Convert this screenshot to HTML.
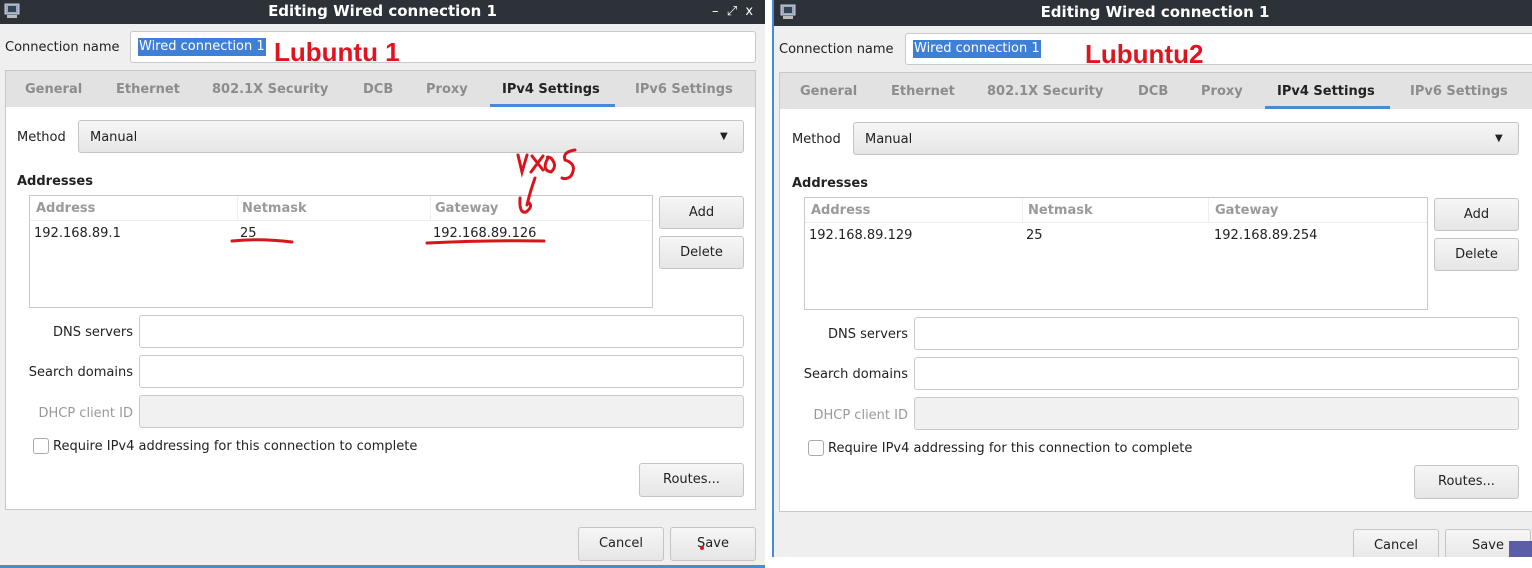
<!DOCTYPE html>
<html><head><meta charset="utf-8"><style>
*{box-sizing:border-box;margin:0;padding:0}
body{width:1532px;height:568px;overflow:hidden;background:#fff;position:relative;font-family:"DejaVu Sans","Liberation Sans",sans-serif;font-size:13px;color:#222}
.d{position:absolute;background:#efefef;overflow:hidden}
.a{position:absolute;white-space:nowrap;padding-top:2px}
.tb{position:absolute;left:0;right:0;top:0;background:#2d3138;color:#fff;font-weight:bold;font-size:15px;text-align:center}
.in{position:absolute;background:#fff;border:1px solid #c9c9c9;border-radius:3px}
.btn{position:absolute;border:1px solid #c4c4c4;border-radius:3px;background:linear-gradient(#f6f6f6,#e6e6e6);text-align:center}
.tab{position:absolute;color:#8c8c8c;font-weight:bold;font-size:13px;padding-top:2px}
.hd{color:#9a9a9a;font-weight:bold}
</style></head><body>

<!-- LEFT -->
<div class="d" style="left:0;top:0;width:765px;height:568px">
 <div class="tb" style="height:24px;line-height:22px">Editing Wired connection 1</div>
 <svg class="a" style="left:4px;top:3px;padding:0" width="18" height="16"><rect x="1" y="1" width="14" height="10" fill="#9aa8c0" stroke="#ccd" /><rect x="4" y="3" width="8" height="6" fill="#345"/><rect x="3" y="12" width="10" height="3" fill="#bbb"/></svg>
 <div class="a" style="left:712px;top:2px;color:#fff;font-size:13px">–&nbsp;&nbsp;⤢&nbsp;&nbsp;x</div>
 <div class="a" style="left:5px;top:38px">Connection name</div>
 <div class="in" style="left:130px;top:31px;width:626px;height:32px"></div>
 <div class="a" style="left:138px;top:38px;height:18px;background:#3e7fd8;color:#fff;padding:0 1px;line-height:17px">Wired connection 1</div>
 <div class="a" style="left:274px;top:35px;color:#e0141e;font-size:26px;font-family:'Liberation Sans',sans-serif;font-weight:bold">Lubuntu 1</div>
 <div class="a" style="left:5px;top:70px;width:751px;height:440px;background:#fff;border:1px solid #c8c8c8"></div>
 <div class="a" style="left:6px;top:71px;width:749px;height:36px;background:#e2e2e2"></div>
 <div class="tab" style="left:25px;top:80px">General</div>
 <div class="tab" style="left:116px;top:80px">Ethernet</div>
 <div class="tab" style="left:212px;top:80px">802.1X Security</div>
 <div class="tab" style="left:363px;top:80px">DCB</div>
 <div class="tab" style="left:426px;top:80px">Proxy</div>
 <div class="tab" style="left:502px;top:80px;color:#222">IPv4 Settings</div>
 <div class="tab" style="left:635px;top:80px">IPv6 Settings</div>
 <div class="a" style="left:490px;top:104px;width:125px;height:3px;background:#4a8ad4;padding:0"></div>
 <div class="a" style="left:17px;top:128px">Method</div>
 <div class="btn" style="left:78px;top:120px;width:666px;height:33px"></div>
 <div class="a" style="left:90px;top:128px">Manual</div>
 <div class="a" style="left:720px;top:129px;font-size:10px">▼</div>
 <div class="a" style="left:17px;top:172px;font-weight:bold">Addresses</div>
 <div class="a" style="left:29px;top:195px;width:624px;height:113px;border:1px solid #c8c8c8;background:#fff"></div>
 <div class="a" style="left:30px;top:220px;width:622px;height:1px;background:#eee;padding:0"></div>
 <div class="a" style="left:237px;top:196px;width:1px;height:24px;background:#eee;padding:0"></div>
 <div class="a" style="left:430px;top:196px;width:1px;height:24px;background:#eee;padding:0"></div>
 <div class="a hd" style="left:36px;top:199px">Address</div>
 <div class="a hd" style="left:242px;top:199px">Netmask</div>
 <div class="a hd" style="left:435px;top:199px">Gateway</div>
 <div class="a" style="left:34px;top:224px">192.168.89.1</div>
 <div class="a" style="left:240px;top:224px">25</div>
 <div class="a" style="left:433px;top:224px">192.168.89.126</div>
 <div class="btn" style="left:659px;top:196px;width:85px;height:33px;line-height:31px">Add</div>
 <div class="btn" style="left:659px;top:236px;width:85px;height:33px;line-height:31px">Delete</div>
 <div class="a" style="left:0;width:133px;text-align:right;top:323px">DNS servers</div>
 <div class="in" style="left:139px;top:315px;width:605px;height:33px"></div>
 <div class="a" style="left:0;width:133px;text-align:right;top:363px">Search domains</div>
 <div class="in" style="left:139px;top:355px;width:605px;height:33px"></div>
 <div class="a" style="left:0;width:133px;text-align:right;top:404px;color:#999">DHCP client ID</div>
 <div class="in" style="left:139px;top:395px;width:605px;height:33px;background:#f1f1f1"></div>
 <div class="a" style="left:33px;top:438px;width:16px;height:16px;border:1px solid #aaa;border-radius:3px;background:#fff;padding:0"></div>
 <div class="a" style="left:53px;top:437px">Require IPv4 addressing for this connection to complete</div>
 <div class="btn" style="left:639px;top:463px;width:105px;height:34px;line-height:32px">Routes...</div>
 <div class="btn" style="left:578px;top:527px;width:86px;height:34px;line-height:32px">Cancel</div>
 <div class="btn" style="left:670px;top:527px;width:86px;height:34px;line-height:32px">Save</div>
 <div class="a" style="left:0;top:565px;width:765px;height:3px;background:#4a8ad4;padding:0"></div>
 <svg class="a" style="left:0;top:0;padding:0" width="765" height="568">
  <g stroke="#d8141c" fill="none" stroke-linecap="round" stroke-width="3">
   <path d="M232 241 Q260 238 292 242"/>
   <path d="M427 243 Q490 240 544 241"/>
   <path d="M518 155 L522 172 L527 155 M532 156 L543 170 M543 156 L531 172 M548 158 Q541 170 551 172 Q558 166 551 158 Q546 156 548 158 M575 150 Q562 152 565 160 Q578 164 571 176 Q566 180 562 178"/>
   <path d="M535 178 Q530 192 527 205 M520 198 Q519 214 526 212 Q534 206 528 202"/>
  </g>
  <circle cx="702" cy="548" r="2" fill="#d8141c"/>
 </svg>
</div>

<!-- RIGHT -->
<div class="a" style="left:772px;top:0;width:2px;height:557px;background:#4a8ad4;padding:0"></div>
<div class="d" style="left:774px;top:0;width:758px;height:557px">
 <div class="tb" style="height:26px;line-height:24px;left:0;width:762px">Editing Wired connection 1</div>
 <svg class="a" style="left:6px;top:4px;padding:0" width="18" height="16"><rect x="1" y="1" width="14" height="10" fill="#9aa8c0" stroke="#ccd" /><rect x="4" y="3" width="8" height="6" fill="#345"/><rect x="3" y="12" width="10" height="3" fill="#bbb"/></svg>
 <div class="a" style="left:5px;top:40px">Connection name</div>
 <div class="in" style="left:131px;top:33px;width:630px;height:32px"></div>
 <div class="a" style="left:139px;top:40px;height:18px;background:#3e7fd8;color:#fff;padding:0 1px;line-height:17px">Wired connection 1</div>
 <div class="a" style="left:311px;top:37px;color:#e0141e;font-size:26px;font-family:'Liberation Sans',sans-serif;font-weight:bold">Lubuntu2</div>
 <div class="a" style="left:5px;top:72px;width:760px;height:440px;background:#fff;border:1px solid #c8c8c8"></div>
 <div class="a" style="left:6px;top:73px;width:758px;height:36px;background:#e2e2e2"></div>
 <div class="tab" style="left:26px;top:82px">General</div>
 <div class="tab" style="left:117px;top:82px">Ethernet</div>
 <div class="tab" style="left:213px;top:82px">802.1X Security</div>
 <div class="tab" style="left:364px;top:82px">DCB</div>
 <div class="tab" style="left:427px;top:82px">Proxy</div>
 <div class="tab" style="left:503px;top:82px;color:#222">IPv4 Settings</div>
 <div class="tab" style="left:636px;top:82px">IPv6 Settings</div>
 <div class="a" style="left:491px;top:106px;width:125px;height:3px;background:#4a8ad4;padding:0"></div>
 <div class="a" style="left:18px;top:130px">Method</div>
 <div class="btn" style="left:79px;top:122px;width:666px;height:33px"></div>
 <div class="a" style="left:91px;top:130px">Manual</div>
 <div class="a" style="left:721px;top:131px;font-size:10px">▼</div>
 <div class="a" style="left:18px;top:174px;font-weight:bold">Addresses</div>
 <div class="a" style="left:30px;top:197px;width:624px;height:113px;border:1px solid #c8c8c8;background:#fff"></div>
 <div class="a" style="left:31px;top:222px;width:622px;height:1px;background:#eee;padding:0"></div>
 <div class="a" style="left:248px;top:198px;width:1px;height:24px;background:#eee;padding:0"></div>
 <div class="a" style="left:434px;top:198px;width:1px;height:24px;background:#eee;padding:0"></div>
 <div class="a hd" style="left:37px;top:201px">Address</div>
 <div class="a hd" style="left:254px;top:201px">Netmask</div>
 <div class="a hd" style="left:441px;top:201px">Gateway</div>
 <div class="a" style="left:35px;top:226px">192.168.89.129</div>
 <div class="a" style="left:252px;top:226px">25</div>
 <div class="a" style="left:440px;top:226px">192.168.89.254</div>
 <div class="btn" style="left:660px;top:198px;width:85px;height:33px;line-height:31px">Add</div>
 <div class="btn" style="left:660px;top:238px;width:85px;height:33px;line-height:31px">Delete</div>
 <div class="a" style="left:0;width:134px;text-align:right;top:325px">DNS servers</div>
 <div class="in" style="left:140px;top:317px;width:605px;height:33px"></div>
 <div class="a" style="left:0;width:134px;text-align:right;top:365px">Search domains</div>
 <div class="in" style="left:140px;top:357px;width:605px;height:33px"></div>
 <div class="a" style="left:0;width:134px;text-align:right;top:406px;color:#999">DHCP client ID</div>
 <div class="in" style="left:140px;top:397px;width:605px;height:33px;background:#f1f1f1"></div>
 <div class="a" style="left:34px;top:440px;width:16px;height:16px;border:1px solid #aaa;border-radius:3px;background:#fff;padding:0"></div>
 <div class="a" style="left:54px;top:439px">Require IPv4 addressing for this connection to complete</div>
 <div class="btn" style="left:640px;top:465px;width:105px;height:34px;line-height:32px">Routes...</div>
 <div class="btn" style="left:579px;top:529px;width:86px;height:34px;line-height:32px">Cancel</div>
 <div class="btn" style="left:671px;top:529px;width:86px;height:34px;line-height:32px">Save</div>
 <div class="a" style="left:735px;top:541px;width:23px;height:16px;background:#5b5ea6;padding:0"></div>
</div>
</body></html>
